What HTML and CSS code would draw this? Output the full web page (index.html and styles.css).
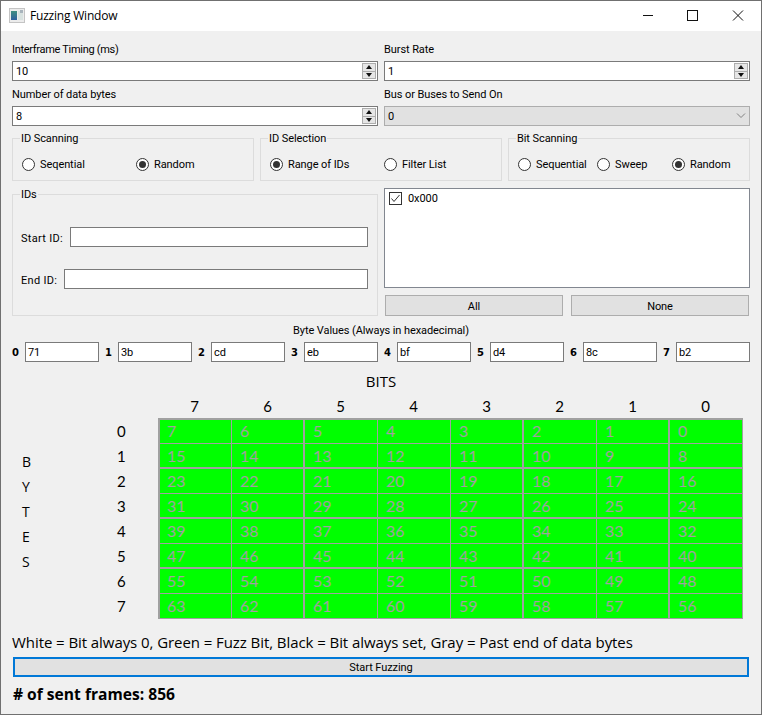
FILE: index.html
```html
<!DOCTYPE html>
<html lang="en">
<head>
<meta charset="utf-8">
<title>Fuzzing Window</title>
<link rel="stylesheet" href="styles.css">
</head>
<body>
<div class="window">
  <header class="titlebar">
    <svg class="app-icon" width="16" height="15" viewBox="0 0 16 15"><defs><linearGradient id="ic" x1="0" y1="0" x2="0" y2="1"><stop offset="0" stop-color="#3f8f80"/><stop offset="1" stop-color="#2f5f9f"/></linearGradient></defs><rect x="0.5" y="0.5" width="15" height="14" fill="#ececec" stroke="#c4c4c4"/><rect x="2" y="3" width="6" height="9" fill="url(#ic)"/><rect x="9" y="3" width="5" height="9" fill="#d8e2e0"/><rect x="11" y="2" width="3" height="3" fill="#a8b4bc"/></svg>
    <span class="title">Fuzzing Window</span>
    <div class="win-controls">
      <svg width="46" height="30" viewBox="0 0 46 30"><path d="M20 14.5H30" stroke="#111" fill="none"/></svg>
      <svg width="46" height="30" viewBox="0 0 46 30"><rect x="18.5" y="9.5" width="10" height="10" stroke="#111" fill="none"/></svg>
      <svg width="46" height="30" viewBox="0 0 46 30"><path d="M18 9.5L28 19.5M28 9.5L18 19.5" stroke="#111" fill="none"/></svg>
    </div>
  </header>

  <main class="content">
    <section class="two-col form-top">
      <div class="field">
        <label class="lbl tight">Interframe Timing (ms)</label>
        <div class="spin"><span class="val">10</span><span class="arrows"><i class="up"></i><i class="down"></i></span></div>
      </div>
      <div class="field">
        <label class="lbl">Burst Rate</label>
        <div class="spin"><span class="val">1</span><span class="arrows"><i class="up"></i><i class="down"></i></span></div>
      </div>
      <div class="field">
        <label class="lbl">Number of data bytes</label>
        <div class="spin"><span class="val">8</span><span class="arrows"><i class="up"></i><i class="down"></i></span></div>
      </div>
      <div class="field">
        <label class="lbl">Bus or Buses to Send On</label>
        <div class="combo"><span class="val">0</span><svg width="10" height="6" viewBox="0 0 10 6"><path d="M1 0.5L5 4.5L9 0.5" stroke="#808080" fill="none"/></svg></div>
      </div>
    </section>

    <section class="groups">
      <div class="group choice">
        <span class="legend">ID Scanning</span>
        <div class="radio"><span class="dot"></span>Seqential</div>
        <div class="radio on"><span class="dot"></span>Random</div>
      </div>
      <div class="group choice">
        <span class="legend">ID Selection</span>
        <div class="radio on"><span class="dot"></span>Range of IDs</div>
        <div class="radio"><span class="dot"></span>Filter List</div>
      </div>
      <div class="group choice bits">
        <span class="legend">Bit Scanning</span>
        <div class="radio"><span class="dot"></span>Sequential</div>
        <div class="radio"><span class="dot"></span>Sweep</div>
        <div class="radio on"><span class="dot"></span>Random</div>
      </div>
    </section>

    <section class="ids-row">
      <div class="group ids">
        <span class="legend">IDs</span>
        <div class="id-line"><span>Start ID:</span><div class="box"></div></div>
        <div class="id-line"><span>End ID:</span><div class="box"></div></div>
      </div>
      <div class="list-col">
        <div class="list">
          <div class="item">
            <svg width="13" height="13" viewBox="0 0 13 13"><rect x="0.5" y="0.5" width="12" height="12" fill="#fff" stroke="#333"/><path d="M2.5 6.5L5 9.5L10.5 3" stroke="#333" fill="none"/></svg>
            <span>0x000</span>
          </div>
        </div>
        <div class="btns"><div class="btn">All</div><div class="btn">None</div></div>
      </div>
    </section>

    <div class="caption">Byte Values (Always in hexadecimal)</div>
    <section class="bytes">
      <b>0</b><div class="byte">71</div>
      <b>1</b><div class="byte">3b</div>
      <b>2</b><div class="byte">cd</div>
      <b>3</b><div class="byte">eb</div>
      <b>4</b><div class="byte">bf</div>
      <b>5</b><div class="byte">d4</div>
      <b>6</b><div class="byte">8c</div>
      <b>7</b><div class="byte">b2</div>
    </section>

    <div class="bits-title">BITS</div>
    <div class="col-heads"><span>7</span><span>6</span><span>5</span><span>4</span><span>3</span><span>2</span><span>1</span><span>0</span></div>
    <section class="matrix">
      <div class="bytes-word"><span>B</span><span>Y</span><span>T</span><span>E</span><span>S</span></div>
      <div class="row-heads"><span>0</span><span>1</span><span>2</span><span>3</span><span>4</span><span>5</span><span>6</span><span>7</span></div>
      <div class="grid" id="grid"></div>
    </section>

    <div class="legend-text">White = Bit always 0, Green = Fuzz Bit, Black = Bit always set, Gray = Past end of data bytes</div>
    <div class="start">Start Fuzzing</div>
    <div class="sent"># of sent frames: 856</div>
  </main>
</div>
<script>
  var g = document.getElementById('grid');
  for (var r = 0; r < 8; r++) {
    for (var c = 7; c >= 0; c--) {
      var d = document.createElement('div');
      d.className = 'cell';
      d.textContent = r * 8 + c;
      g.appendChild(d);
    }
  }
</script>
</body>
</html>
```
FILE: styles.css
```css
* { box-sizing: border-box; }
html, body { margin: 0; padding: 0; }
body { width: 762px; height: 715px; overflow: hidden; font-family: Roboto, "Open Sans", sans-serif; font-size: 11px; letter-spacing: -0.08px; color: #000; }
.window { width: 762px; height: 715px; border: 1px solid #707070; background: #f0f0f0; display: flex; flex-direction: column; }
.titlebar { height: 30px; background: #fff; display: flex; align-items: center; padding-left: 8px; padding-bottom: 1px; flex: none; }
.app-icon { flex: none; }
.title { margin-left: 5px; font-family: "Open Sans", sans-serif; font-size: 12px; letter-spacing: -0.2px; }
.win-controls { margin-left: auto; display: flex; align-self: flex-start; }
.win-controls svg { display: block; }
.content { flex: 1; padding: 0 11px; display: flex; flex-direction: column; }

.two-col { display: grid; grid-template-columns: 366px 366px; column-gap: 6px; }
.lbl { display: block; height: 30px; padding-top: 11px; line-height: 16px; }
.tight { letter-spacing: -0.3px; }
.form-top .field:nth-child(n+3) .lbl { height: 25px; padding-top: 6px; }
.spin, .combo { height: 20px; border: 1px solid #7a7a7a; background: #fff; display: flex; align-items: center; padding-left: 3px; justify-content: space-between; }
.combo { background: #e1e1e1; border-color: #adadad; padding-right: 3px; }
.val { line-height: 18px; padding-top: 2px; }
.arrows { width: 14px; height: 16px; margin-right: 1px; border: 1px solid #adadad; display: flex; flex-direction: column; background: #e6e6e6; }
.arrows i { flex: 1; display: flex; align-items: center; justify-content: center; }
.arrows i::before { content: ""; width: 0; height: 0; border-left: 3.5px solid transparent; border-right: 3.5px solid transparent; }
.arrows .up { border-bottom: 1px solid #adadad; }
.arrows .up::before { border-bottom: 4px solid #111; }
.arrows .down::before { border-top: 4px solid #111; }

.group { border: 1px solid #dcdcdc; position: relative; }
.legend { position: absolute; left: 7px; top: -8px; padding: 0 1px; background: #f0f0f0; line-height: 16px; }
.groups { display: grid; grid-template-columns: 242px 242px 242px; column-gap: 6px; margin-top: 12px; }
.choice { height: 43px; display: grid; grid-template-columns: 114px auto; align-items: center; padding: 10px 0 0 9px; }
.bits { grid-template-columns: 79px 75px auto; }
.radio { display: flex; align-items: center; gap: 5px; white-space: nowrap; line-height: 16px; }
.dot { width: 13px; height: 13px; border: 1px solid #333; border-radius: 50%; background: #fff; display: block; position: relative; flex: none; }
.on .dot::after { content: ""; position: absolute; left: 2px; top: 2px; width: 7px; height: 7px; border-radius: 50%; background: #333; }

.ids-row { display: grid; grid-template-columns: 366px 366px; column-gap: 6px; margin-top: 7px; }
.ids { height: 122px; margin-top: 6px; padding: 32px 9px 0 8px; display: flex; flex-direction: column; gap: 22px; }
.id-line { display: flex; align-items: center; gap: 7px; height: 20px; }
.id-line span { padding-top: 2px; letter-spacing: 0.3px; }
.box { flex: 1; height: 20px; background: #fff; border: 1px solid #7a7a7a; }
.list-col { display: flex; flex-direction: column; }
.list { height: 100px; background: #fff; border: 1px solid #828790; padding: 3px 4px; }
.item { display: flex; align-items: center; gap: 6px; line-height: 13px; }
.item svg { flex: none; }
.btns { display: flex; gap: 8px; padding: 0 1px; margin-top: 7px; }
.btn { flex: 1; height: 21px; padding-top: 2px; background: #e1e1e1; border: 1px solid #adadad; display: flex; align-items: center; justify-content: center; }

.caption { text-align: center; height: 26px; line-height: 15px; padding-top: 7px; }
.bytes { display: flex; align-items: center; height: 20px; }
.bytes b { width: 13px; font-family: "DejaVu Sans", sans-serif; font-size: 10px; }
.byte { width: 74px; height: 20px; border: 1px solid #7a7a7a; background: #fff; padding-left: 2px; line-height: 20px; margin-right: 6px; }
.bytes .byte:last-child { margin-right: 0; }

.bits-title { text-align: center; font-family: "Open Sans", sans-serif; font-size: 15px; letter-spacing: 0; line-height: 20px; margin-top: 9px; }
.col-heads { display: grid; grid-template-columns: repeat(8, 73px); margin-left: 146px; font-family: Lato, sans-serif; font-size: 15px; line-height: 20px; margin-top: 5px; text-align: center; height: 20px; }
.matrix { display: flex; margin-top: 2px; height: 201px; }
.bytes-word { width: 105px; padding-left: 10px; display: flex; flex-direction: column; padding-top: 31px; font-family: "Open Sans", sans-serif; font-size: 14px; }
.bytes-word span { height: 25px; line-height: 25px; }
.row-heads { width: 41px; padding-top: 1px; display: flex; flex-direction: column; font-family: Lato, sans-serif; font-size: 15px; }
.row-heads span { height: 25px; line-height: 25px; }
.grid { width: 585px; height: 201px; display: grid; grid-template-columns: repeat(8, 73px); grid-auto-rows: 25px; background: #00ff00; border: 1px solid #a0a0a0; }
.cell { color: #a0a0a0; font-family: Lato, sans-serif; font-size: 16px; letter-spacing: 0; padding-left: 8px; line-height: 23px; border-right: 1px solid #a0a0a0; border-bottom: 1px solid #a0a0a0; }
.cell:nth-child(-n+8) { box-shadow: inset 0 1px #a0a0a0; }
.cell:nth-child(8n+1) { box-shadow: inset 1px 0 #a0a0a0; }
.cell:first-child { box-shadow: inset 1px 1px #a0a0a0; }
.cell:nth-child(8n+2), .cell:nth-child(8n+5), .cell:nth-child(8n+7) { border-right-width: 2px; }
.cell:nth-child(n+9):nth-child(-n+16), .cell:nth-child(n+25):nth-child(-n+32), .cell:nth-child(n+41):nth-child(-n+48) { border-bottom-width: 2px; }
.cell:nth-child(8n) { border-right: 0; }
.cell:nth-last-child(-n+8) { border-bottom: 0; }

.legend-text { font-family: "Open Sans", sans-serif; font-size: 15px; letter-spacing: -0.07px; line-height: 20px; margin-top: 13px; }
.start { height: 20px; margin: 5px 1px 0 1px; border: 2px solid #0078d7; background: #e1e1e1; text-align: center; line-height: 18px; }
.sent { font-family: "Open Sans", sans-serif; font-weight: 700; font-size: 15.6px; letter-spacing: 0; line-height: 20px; margin-top: 7px; margin-left: 1px; }
```
